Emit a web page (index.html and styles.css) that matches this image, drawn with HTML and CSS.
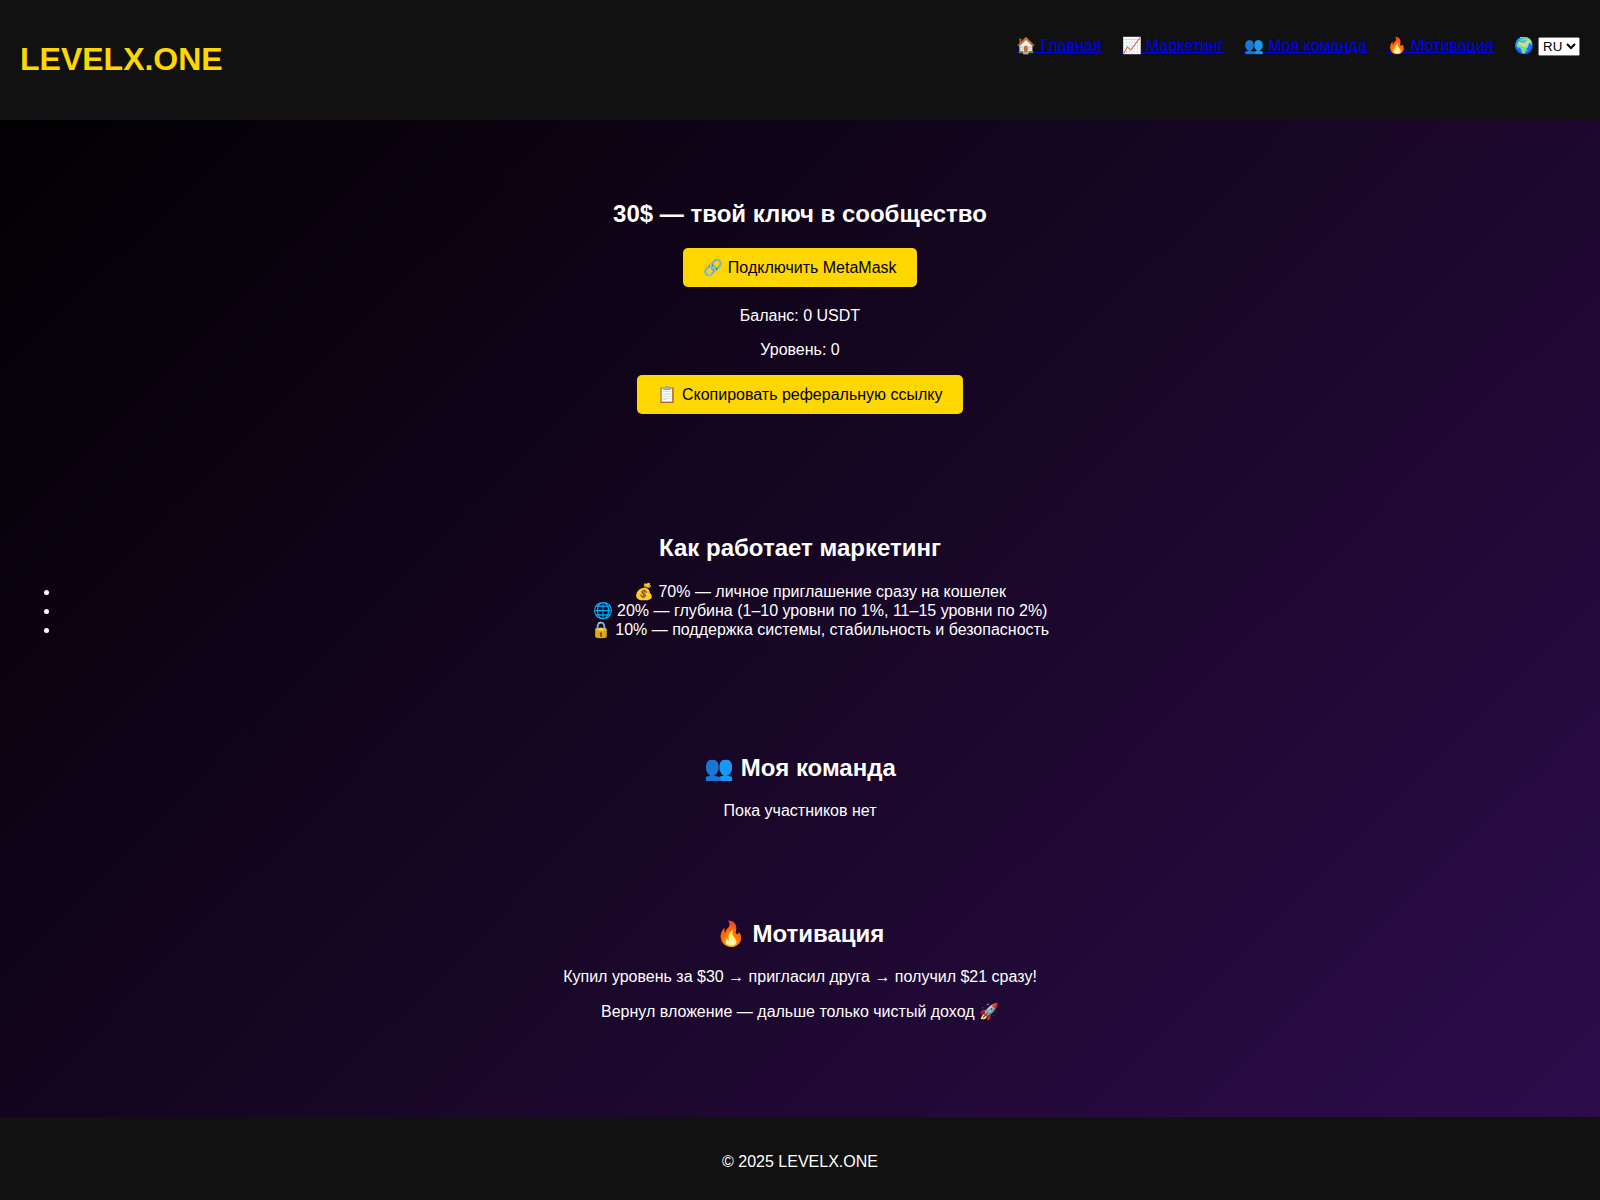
FILE: index.html
```html
<!DOCTYPE html>
<html lang="ru">
<head>
<meta charset="UTF-8">
<title>LEVELX.ONE</title>
<link rel="stylesheet" href="styles.css">
</head>
<body>
<header class="header">
  <h1 class="logo">LEVELX.ONE</h1>
  <nav>
    <ul class="menu">
      <li><a href="#home">🏠 Главная</a></li>
      <li><a href="#marketing">📈 Маркетинг</a></li>
      <li><a href="#team">👥 Моя команда</a></li>
      <li><a href="#motivation">🔥 Мотивация</a></li>
      <li><label for="lang">🌍</label> <select id="lang" aria-label="Язык"><option>RU</option><option>EN</option></select></li>
    </ul>
  </nav>
</header>
<main>
  <section class="section hero" id="home">
    <h2>30$ — твой ключ в сообщество</h2>
    <button class="btn" type="button">🔗 Подключить MetaMask</button>
    <div class="wallet">
      <p>Баланс: 0 USDT</p>
      <p>Уровень: 0</p>
    </div>
    <button class="btn" type="button">📋 Скопировать реферальную ссылку</button>
  </section>
  <section class="section" id="marketing">
    <h2>Как работает маркетинг</h2>
    <ul>
      <li>💰 70% — личное приглашение сразу на кошелек</li>
      <li>🌐 20% — глубина (1–10 уровни по 1%, 11–15 уровни по 2%)</li>
      <li>🔒 10% — поддержка системы, стабильность и безопасность</li>
    </ul>
  </section>
  <section class="section" id="team">
    <h2>👥 Моя команда</h2>
    <div>Пока участников нет</div>
  </section>
  <section class="section" id="motivation">
    <h2>🔥 Мотивация</h2>
    <p>Купил уровень за $30 → пригласил друга → получил $21 сразу!</p>
    <p>Вернул вложение — дальше только чистый доход 🚀</p>
  </section>
</main>
<footer class="footer">
  <p>© 2025 LEVELX.ONE</p>
</footer>
</body>
</html>
```

FILE: styles.css
```css
body {
  margin: 0;
  font-family: Arial, "Liberation Sans", sans-serif;
  color: #fff;
  background: linear-gradient(135deg, #000, #170624, #2e0d4f);
}

.header {
  display: flex;
  justify-content: space-between;
  padding: 20px;
  background: #111;
}

.logo {
  color: #ffd700;
}

.menu {
  display: flex;
  gap: 20px;
  list-style: none;
}

.section {
  padding: 40px 20px;
  text-align: center;
}

.hero {
  padding: 60px 20px;
}

.wallet {
  margin-top: 20px;
}

.btn {
  padding: 10px 20px;
  border: none;
  border-radius: 5px;
  background: #ffd700;
  font-size: 16px;
  cursor: pointer;
}

.footer {
  margin-top: 40px;
  padding: 20px;
  text-align: center;
  background: #111;
}
```
